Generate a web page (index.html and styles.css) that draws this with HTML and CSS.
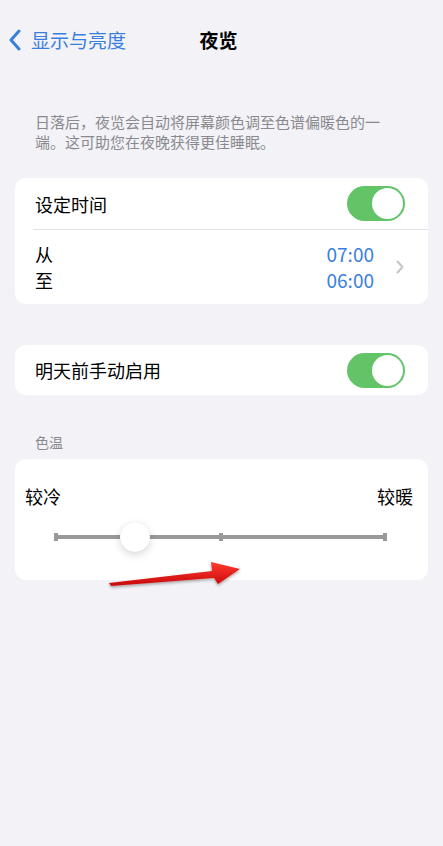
FILE: index.html
```html
<!DOCTYPE html>
<html lang="zh">
<head>
<meta charset="utf-8">
<link rel="stylesheet" href="styles.css">
</head>
<body>
<div class="screen">
  <header class="nav">
    <div class="back">
      <svg class="back-chev" width="13" height="22" viewBox="0 0 13 22"><path d="M11 2 L3 11 L11 20" fill="none" stroke="#3a7ee0" stroke-width="3" stroke-linecap="round" stroke-linejoin="round"/></svg>
      <span>显示与亮度</span>
    </div>
    <div class="title">夜览</div>
    <div></div>
  </header>

  <p class="desc">日落后，夜览会自动将屏幕颜色调至色谱偏暖色的一端。这可助您在夜晚获得更佳睡眠。</p>

  <section class="card">
    <div class="row row-top">
      <span class="label">设定时间</span>
      <div class="toggle"><div class="knob"></div></div>
    </div>
    <div class="divider"></div>
    <div class="row row-times">
      <div class="labels"><span>从</span><span>至</span></div>
      <div class="times"><span>07:00</span><span>06:00</span></div>
      <svg class="chev" width="8" height="14" viewBox="0 0 8 14"><path d="M1.5 1.5 L6.5 7 L1.5 12.5" fill="none" stroke="#c4c4c7" stroke-width="2" stroke-linecap="round" stroke-linejoin="round"/></svg>
    </div>
  </section>

  <section class="card card-manual">
    <div class="row">
      <span class="label">明天前手动启用</span>
      <div class="toggle"><div class="knob"></div></div>
    </div>
  </section>

  <div class="section-label">色温</div>

  <section class="card card-temp">
    <div class="temp-labels"><span>较冷</span><span>较暖</span></div>
    <div class="slider">
      <div class="track"></div>
      <div class="tick tick-start"></div>
      <div class="tick tick-mid"></div>
      <div class="tick tick-end"></div>
      <div class="thumb" style="left: 24.3%"></div>
    </div>
  </section>

  <svg class="arrow" width="443" height="846" viewBox="0 0 443 846">
    <defs>
      <linearGradient id="ag" x1="0" y1="0" x2="0" y2="1">
        <stop offset="0" stop-color="#ff3b30"/>
        <stop offset="1" stop-color="#c8070a"/>
      </linearGradient>
      <filter id="sh" x="-20%" y="-50%" width="140%" height="200%">
        <feDropShadow dx="0" dy="1.5" stdDeviation="1.5" flood-color="#000" flood-opacity="0.35"/>
      </filter>
    </defs>
    <polygon points="109,583 212,571 211,562 240,569 218,584 214,578 111,586" fill="url(#ag)" filter="url(#sh)"/>
  </svg>
</div>
</body>
</html>
```

FILE: styles.css
```css
* { box-sizing: border-box; }
html, body { margin: 0; padding: 0; }
body {
  background: #f2f2f7;
  font-family: "Noto Sans CJK SC", "Noto Sans", sans-serif;
  color: #000;
}
.screen {
  position: relative;
  width: 443px;
  height: 846px;
  overflow: hidden;
}
.nav {
  height: 79px;
  display: grid;
  grid-template-columns: 1fr auto 1fr;
  align-items: center;
}
.back {
  display: flex;
  align-items: center;
  gap: 10px;
  padding-left: 8px;
  color: #3a7ee0;
  font-size: 19px;
}
.title {
  font-size: 19px;
  font-weight: 700;
  margin-right: 6px;
}
.desc {
  margin: 33px 0 0;
  padding: 0 50px 0 35px;
  font-size: 15px;
  line-height: 20px;
  color: #8a8a8e;
}
.card {
  margin: 26px 15px 0;
  background: #fff;
  border-radius: 11px;
}
.row {
  display: flex;
  align-items: center;
  justify-content: space-between;
  padding: 0 23px 0 20px;
}
.row-top { height: 51px; }
.label { font-size: 18px; }
.divider {
  height: 1px;
  background: #e3e3e6;
  margin-left: 18px;
}
.toggle {
  width: 58px;
  height: 35px;
  border-radius: 18px;
  background: #62c466;
  display: flex;
  align-items: center;
  justify-content: flex-end;
  padding: 2px;
}
.knob {
  width: 31px;
  height: 31px;
  border-radius: 50%;
  background: #fff;
}
.row-times {
  height: 74px;
  padding-right: 24px;
}
.labels, .times {
  display: flex;
  flex-direction: column;
  line-height: 26px;
  font-size: 18px;
}
.labels { flex: 1; }
.times {
  color: #3a7ee0;
  font-size: 19px;
  align-items: flex-end;
  margin-right: 22px;
}
.card-manual { margin-top: 41px; }
.card-manual .row { height: 50px; }
.section-label {
  margin: 37px 0 0 35px;
  font-size: 14px;
  line-height: 20px;
  color: #8a8a8e;
}
.card-temp {
  margin-top: 7px;
  padding: 24px 15px 28px 10px;
}
.temp-labels {
  display: flex;
  justify-content: space-between;
  font-size: 18px;
  line-height: 26px;
}
.slider {
  position: relative;
  height: 30px;
  margin: 13px 26px 0 29px;
}
.track {
  position: absolute;
  left: 0;
  right: 0;
  top: 13px;
  height: 4px;
  background: #999;
}
.tick {
  position: absolute;
  top: 11px;
  width: 4px;
  height: 8px;
  background: #999;
}
.tick-start { left: 0; }
.tick-mid { left: calc(50% - 2px); }
.tick-end { right: 0; }
.thumb {
  position: absolute;
  top: 0;
  width: 30px;
  height: 30px;
  margin-left: -15px;
  border-radius: 50%;
  background: #fff;
  box-shadow: 0 3px 8px rgba(0,0,0,0.15), 0 0 1px rgba(0,0,0,0.1);
}
.arrow {
  position: absolute;
  left: 0;
  top: 0;
  pointer-events: none;
}
```
